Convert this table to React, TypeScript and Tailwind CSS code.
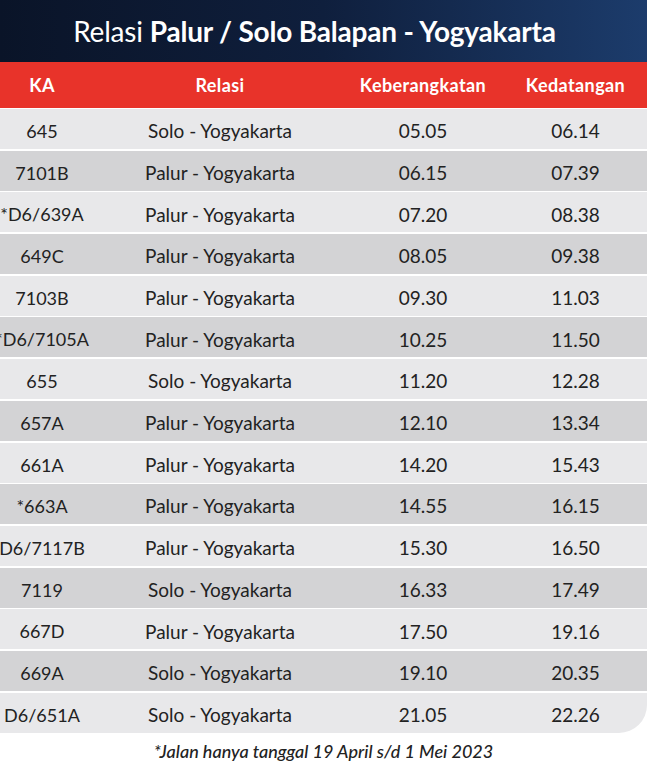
const rows: [string, string, string, string][] = [
  ["645", "Solo - Yogyakarta", "05.05", "06.14"],
  ["7101B", "Palur - Yogyakarta", "06.15", "07.39"],
  ["*D6/639A", "Palur - Yogyakarta", "07.20", "08.38"],
  ["649C", "Palur - Yogyakarta", "08.05", "09.38"],
  ["7103B", "Palur - Yogyakarta", "09.30", "11.03"],
  ["*D6/7105A", "Palur - Yogyakarta", "10.25", "11.50"],
  ["655", "Solo - Yogyakarta", "11.20", "12.28"],
  ["657A", "Palur - Yogyakarta", "12.10", "13.34"],
  ["661A", "Palur - Yogyakarta", "14.20", "15.43"],
  ["*663A", "Palur - Yogyakarta", "14.55", "16.15"],
  ["D6/7117B", "Palur - Yogyakarta", "15.30", "16.50"],
  ["7119", "Solo - Yogyakarta", "16.33", "17.49"],
  ["667D", "Palur - Yogyakarta", "17.50", "19.16"],
  ["669A", "Solo - Yogyakarta", "19.10", "20.35"],
  ["D6/651A", "Solo - Yogyakarta", "21.05", "22.26"],
];

const cols = "grid grid-cols-[84px_272px_134px_1fr] items-center";

export default function App() {
  return (
    <div className="w-[647px] h-[767px] overflow-hidden bg-white font-['Lato',sans-serif]">
      {/* Title */}
      <div className="h-[62px] flex items-center justify-center pr-[18px] bg-gradient-to-r from-[#0a1428] via-[#0f1f3d] to-[#1c3c6c] text-white text-[28px] tracking-[-0.2px]">
        <span className="font-normal">Relasi&nbsp;</span>
        <span className="font-bold">Palur / Solo Balapan - Yogyakarta</span>
      </div>

      {/* Column headings */}
      <div className={`${cols} h-[46px] bg-[#e8332a] text-white font-bold text-[18px] tracking-[0.4px]`}>
        <div className="text-center">KA</div>
        <div className="text-center">Relasi</div>
        <div className="text-center">Keberangkatan</div>
        <div className="text-center pl-[14px]">Kedatangan</div>
      </div>

      {/* Rows */}
      <div className="flex flex-col gap-[1.7px] pt-[1px] rounded-br-[28px] overflow-hidden">
        {rows.map((r, i) => (
          <div
            key={r[0]}
            className={`${cols} h-[40px] pt-[5px] text-[19px] text-[#222] ${
              i % 2 === 0 ? "bg-[#e8e8ea]" : "bg-[#d3d3d5]"
            }`}
          >
            <div className="text-center text-[18px] whitespace-nowrap flex justify-center">{r[0]}</div>
            <div className="text-center">{r[1]}</div>
            <div className="text-center">{r[2]}</div>
            <div className="text-center pl-[14px]">{r[3]}</div>
          </div>
        ))}
      </div>

      {/* Footnote */}
      <div className="text-center italic font-medium text-[18px] text-[#222] pt-[5px]">
        *Jalan hanya tanggal 19 April s/d 1 Mei 2023
      </div>
    </div>
  );
}
